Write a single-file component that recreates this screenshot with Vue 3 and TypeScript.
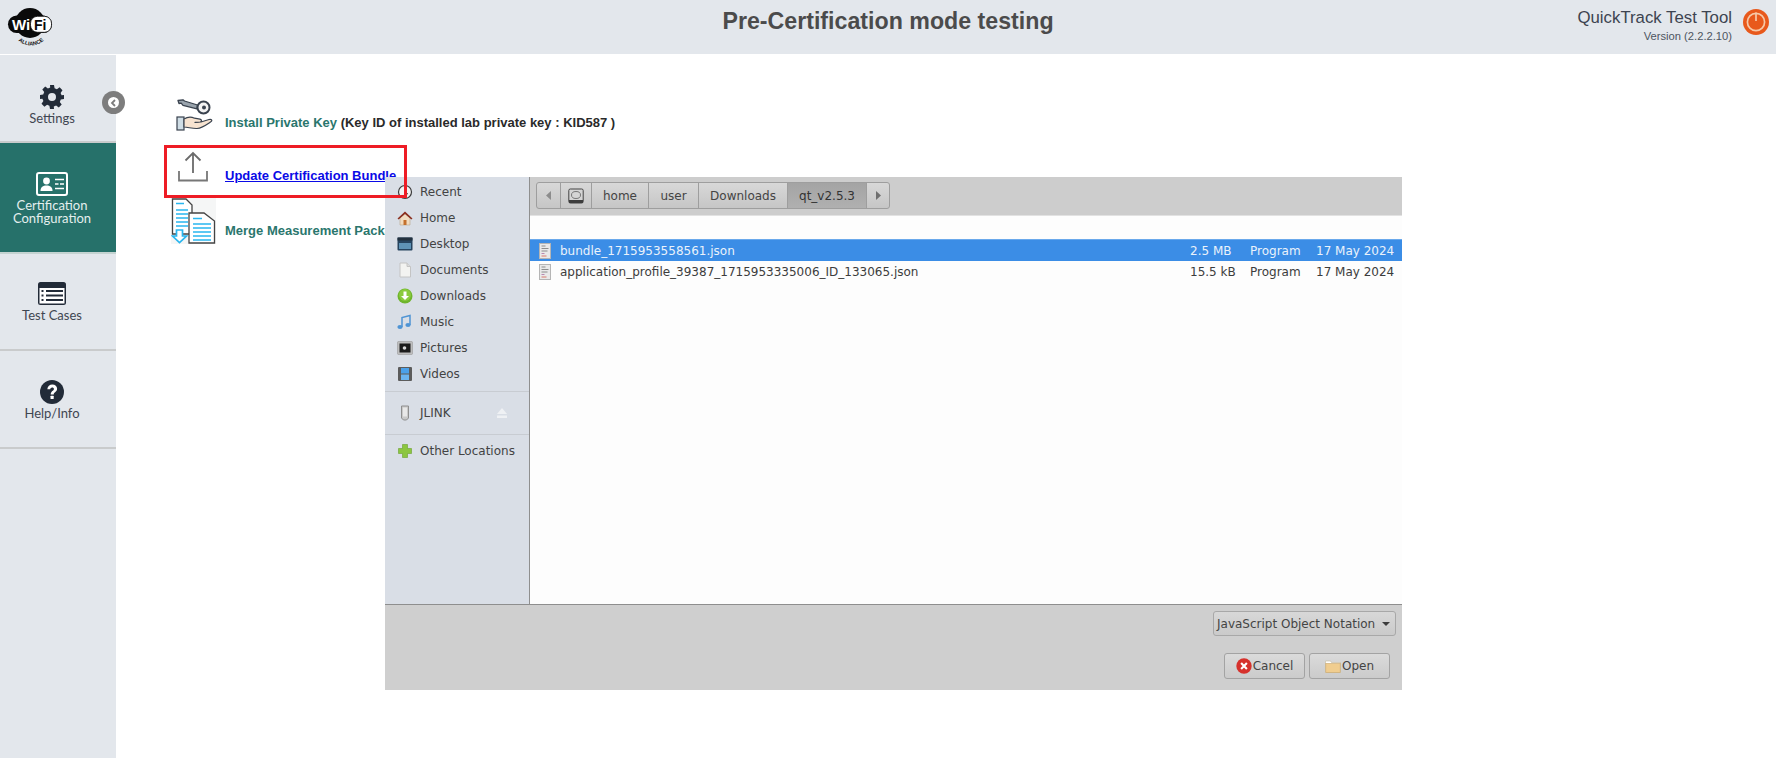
<script setup lang="ts">
interface Place { name: string; icon: string }
interface FileRow { name: string; size: string; kind: string; date: string; selected: boolean }

const places: Place[] = [
  { name: 'Recent', icon: 'recent' },
  { name: 'Home', icon: 'home' },
  { name: 'Desktop', icon: 'desktop' },
  { name: 'Documents', icon: 'documents' },
  { name: 'Downloads', icon: 'downloads' },
  { name: 'Music', icon: 'music' },
  { name: 'Pictures', icon: 'pictures' },
  { name: 'Videos', icon: 'videos' },
]
const crumbs = [
  { label: 'home', w: 57 },
  { label: 'user', w: 50 },
  { label: 'Downloads', w: 89 },
]
const files: FileRow[] = [
  { name: 'bundle_1715953558561.json', size: '2.5 MB', kind: 'Program', date: '17 May 2024', selected: true },
  { name: 'application_profile_39387_1715953335006_ID_133065.json', size: '15.5 kB', kind: 'Program', date: '17 May 2024', selected: false },
]
</script>

<template>
  <div class="page">
    <header class="top">
      <div class="logo">
        <svg width="48" height="40" viewBox="0 0 48 40">
          <circle cx="23" cy="16" r="15" fill="#0a0a0a" />
          <rect x="1" y="8.500" width="44" height="17.500" rx="8.700" fill="#0a0a0a" />
          <rect x="23.500" y="9.300" width="21" height="16" rx="7" fill="#fff" stroke="#0a0a0a" stroke-width=".8" />
          <text x="5" y="23" class="wi">Wi</text>
          <text x="27" y="23" class="fi">Fi</text>
          <path id="arc" d="M5 28 Q24 49 43 28" fill="none" />
          <text class="alliance" text-anchor="middle"><textPath href="#arc" startOffset="50%">ALLIANCE</textPath></text>
        </svg>
      </div>
      <h1 class="title">Pre-Certification mode testing</h1>
      <div class="brand">
        <div class="brand-text">
          <div class="brand-name">QuickTrack Test Tool</div>
          <div class="brand-ver">Version (2.2.2.10)</div>
        </div>
        <svg class="power" width="26" height="26" viewBox="0 0 26 26">
          <circle cx="13" cy="13" r="13" fill="#e8591c" />
          <circle cx="13" cy="13" r="8.600" fill="none" stroke="#f6c9a8" stroke-width="1.700" />
          <path d="M13 3.500V12" stroke="#f6c9a8" stroke-width="1.700" />
        </svg>
      </div>
    </header>

    <div class="body">
      <nav class="side">
        <div class="tile tile-settings">
          <svg width="24" height="24" viewBox="0 0 24 24" fill="#222b38">
            <path fill-rule="evenodd" d="M10 0h4l.6 3.200 2.300 1 2.700-1.900 2.900 2.900-1.900 2.700 1 2.300L24 10v4l-3.200.6-1 2.300 1.900 2.700-2.900 2.900-2.700-1.900-2.300 1L14 24h-4l-.6-3.200-2.300-1-2.700 1.900-2.900-2.900 1.900-2.700-1-2.300L0 14v-4l3.200-.6 1-2.300-1.900-2.700 2.900-2.900 2.700 1.900 2.300-1zM12 8a4 4 0 1 0 0 8 4 4 0 0 0 0-8z" />
          </svg>
          <span>Settings</span>
        </div>
        <div class="tile tile-cert">
          <svg width="32" height="24" viewBox="0 0 32 24">
            <rect x="1" y="1" width="30" height="22" rx="2" fill="#26716a" stroke="#fff" stroke-width="2" />
            <circle cx="10.500" cy="9" r="3.400" fill="#fff" />
            <path d="M4.500 19c0-4 2.500-5.500 6-5.500s6 1.500 6 5.500z" fill="#fff" />
            <path d="M19 7.500h9M19 12h3.500M24 12h4M19 16.500h9" stroke="#fff" stroke-width="1.500" />
          </svg>
          <span>Certification<br />Configuration</span>
        </div>
        <div class="tile tile-test">
          <svg width="28" height="23" viewBox="0 0 28 23">
            <rect width="28" height="23" rx="2.500" fill="#222b38" />
            <rect x="1.500" y="6" width="25" height="15.500" fill="#fff" />
            <path d="M8 9h17M8 13.500h17M8 18h17" stroke="#222b38" stroke-width="2" />
            <path d="M3.500 9h2M3.500 13.500h2M3.500 18h2" stroke="#222b38" stroke-width="2" />
          </svg>
          <span>Test Cases</span>
        </div>
        <div class="tile tile-help">
          <svg width="24" height="24" viewBox="0 0 24 24">
            <circle cx="12" cy="12" r="12" fill="#222b38" />
            <path d="M7.300 9.300C7.600 6.500 9.700 4.600 12.300 4.600c2.900 0 4.800 1.800 4.800 4.100 0 3.300-3.400 3.200-3.400 5.800h-3c0-3.700 3.200-3.700 3.200-5.600 0-1-.7-1.500-1.700-1.500-1.100 0-1.800.7-2 1.900z" fill="#fff" />
            <rect x="10.500" y="15.700" width="3.200" height="3.200" rx=".5" fill="#fff" />
          </svg>
          <span>Help/Info</span>
        </div>
      </nav>

      <main class="main">
        <div class="action action-key">
          <span class="action-icon">
            <svg width="37" height="33" viewBox="0 0 37 33">
              <path d="M21.500 6 8.500 2 7 .8 2 1.500l1 3 2.200-.4L7 6.300l14 3.500z" fill="#9aa4ad" stroke="#39424e" stroke-width="1.300" stroke-linejoin="round" />
              <circle cx="27.500" cy="8.500" r="6" fill="#f3f3f3" stroke="#39424e" stroke-width="2" />
              <circle cx="28" cy="8.500" r="2" fill="#39424e" />
              <rect x="1" y="18" width="7" height="13" fill="#cfdde5" stroke="#39424e" stroke-width="1.200" />
              <path d="M8 20c4-2.500 7-2.500 10.500-.8l5.500 1c2 .5 2 2.800 0 3l-5 .2 6-.4 8-2.500c2.800-.6 3.800 1 1.500 2.500-5 3.400-8.500 6-13.500 6.500-4 .2-8-1-13-1.500z" fill="#f7e3d0" stroke="#39424e" stroke-width="1.200" stroke-linejoin="round" />
            </svg>
          </span>
          <span class="action-text"><a class="link">Install Private Key</a> <b class="plain">(Key ID of installed lab private key : KID587 )</b></span>
        </div>
        <div class="action action-update">
          <span class="action-icon">
            <svg width="32" height="32" viewBox="0 0 32 32" fill="none" stroke="#6b6b6b" stroke-width="1.800">
              <path d="M16 22V2M8.500 9.500 16 2l7.500 7.500" />
              <path d="M2 20V29.500H30V20" stroke="#777" />
            </svg>
          </span>
          <span class="action-text"><a class="hot">Update Certification Bundle</a></span>
        </div>
        <div class="action action-merge">
          <span class="action-icon">
            <svg width="45" height="46" viewBox="0 0 45 46">
              <rect width="45" height="46" fill="#f5f6f6" />
              <path d="M1.500 1H15l6 6v29H1.500z" fill="#fff" stroke="#444" stroke-width="1.300" />
              <path d="M18 15h15l10.500 8v22H18z" fill="#fff" stroke="#444" stroke-width="1.300" />
              <path d="M5 5.500h8M5 12h12M5 16h12M5 20h12M5 24h12M5 28h12" stroke="#29b6ef" stroke-width="1.600" />
              <path d="M22 20.500h9M22 26h18M22 30h18M22 34h18M22 38h18M22 42h18" stroke="#29b6ef" stroke-width="1.600" />
              <path d="M5.500 32h6v6h4l-7 6.500-7-6.500h4z" fill="#fff" stroke="#29b6ef" stroke-width="1.700" />
            </svg>
          </span>
          <span class="action-text"><a class="link">Merge Measurement Package</a></span>
        </div>
      </main>
    </div>

    <button class="collapse" aria-label="Collapse">
      <span class="collapse-dot">
        <svg width="7" height="8" viewBox="0 0 7 8" fill="none" stroke="#7d7d7d" stroke-width="1.800"><path d="M5 1 2 4l3 3" /></svg>
      </span>
    </button>

    <section class="dialog">
      <aside class="places">
        <div v-for="p in places" :key="p.name" class="place">
          <span class="place-icon">
            <svg width="16" height="16" viewBox="0 0 16 16">
              <template v-if="p.icon === 'recent'">
                <circle cx="8" cy="8" r="6.500" fill="#f2f2f2" stroke="#3a3a3a" stroke-width="1.200" />
                <path d="M8 4v4.500l3 1.500" stroke="#3a3a3a" fill="none" />
              </template>
              <template v-else-if="p.icon === 'home'">
                <path d="M3 8v7h10V8L8 3.500z" fill="#f1dcc0" stroke="#b9a48c" stroke-width=".6" />
                <rect x="6.500" y="10" width="3" height="5" fill="#c4702c" />
                <path d="M.5 8.500 8 1.500l7.500 7-1.200 1L8 4 1.700 9.500z" fill="#8b2f1f" />
              </template>
              <template v-else-if="p.icon === 'desktop'">
                <rect x=".5" y="1.500" width="15" height="13" rx="1" fill="#27445f" />
                <rect x=".5" y="1.500" width="15" height="3" fill="#22303e" />
                <rect x="2" y="7" width="12" height="6" fill="#5f93b6" />
              </template>
              <template v-else-if="p.icon === 'documents'">
                <path d="M3 1h7l3.500 3.500V15H3z" fill="#f3f3f1" stroke="#c4c4c4" />
                <path d="M10 1v3.500h3.500" fill="#dcdcdc" stroke="#c4c4c4" />
              </template>
              <template v-else-if="p.icon === 'downloads'">
                <circle cx="8" cy="8" r="7.500" fill="#6fb52c" />
                <circle cx="8" cy="7" r="6" fill="#8bcb3d" />
                <path d="M6.500 3.500h3V8H12l-4 4-4-4h2.500z" fill="#fff" />
              </template>
              <template v-else-if="p.icon === 'music'">
                <path d="M5 13V3.500L13 1.500v9.500" fill="none" stroke="#4f94d4" stroke-width="1.500" />
                <ellipse cx="3" cy="13" rx="2.600" ry="2" fill="#4f94d4" />
                <ellipse cx="11" cy="11" rx="2.600" ry="2" fill="#4f94d4" />
              </template>
              <template v-else-if="p.icon === 'pictures'">
                <rect x=".5" y="1.500" width="15" height="13" rx="1" fill="#bdbdbd" stroke="#999" stroke-width=".6" />
                <rect x="2.500" y="3.500" width="11" height="9" fill="#1b1b1b" />
                <circle cx="7.500" cy="8" r="1.800" fill="#d8d8d8" />
              </template>
              <template v-else>
                <rect x="1" y="1" width="14" height="14" rx="1" fill="#5c5c5c" />
                <rect x="4" y="2" width="8" height="5.500" fill="#4ba1ea" />
                <rect x="4" y="8.500" width="8" height="5.500" fill="#6ab4f0" />
              </template>
            </svg>
          </span>
          <span>{{ p.name }}</span>
        </div>
        <div class="sep"></div>
        <div class="place place-drive">
          <span class="place-icon">
            <svg width="16" height="16" viewBox="0 0 16 16"><path d="M4.500 1h7v12L9.500 15h-3l-2-2z" fill="#c9c9c9" stroke="#8f8f8f" /><rect x="6" y="2.500" width="4" height="9" fill="#e8e8e8" /></svg>
          </span>
          <span class="drive-name">JLINK</span>
          <svg class="eject" width="12" height="12" viewBox="0 0 12 12" fill="#eff1f4"><path d="M6 1l5 6H1z" /><rect x="1" y="8.500" width="10" height="2.500" /></svg>
        </div>
        <div class="sep"></div>
        <div class="place place-other">
          <span class="place-icon">
            <svg width="16" height="16" viewBox="0 0 16 16"><path d="M5.500 1.500h5v4h4v5h-4v4h-5v-4h-4v-5h4z" fill="#8cc63f" stroke="#6aa02c" stroke-width=".6" /></svg>
          </span>
          <span>Other Locations</span>
        </div>
      </aside>

      <div class="pane">
        <div class="toolbar">
          <div class="crumbs">
            <span class="crumb crumb-arrow"><svg width="7" height="9" viewBox="0 0 7 9" fill="#8c8c8c"><path d="M6 0v9L1 4.500z" /></svg></span>
            <span class="crumb crumb-disk">
              <svg width="16" height="16" viewBox="0 0 16 16">
                <rect x=".8" y="1" width="14.400" height="14" rx="1.500" fill="#d5d5d5" stroke="#444" />
                <ellipse cx="8" cy="7" rx="4.500" ry="3.500" fill="none" stroke="#777" />
                <rect x="1" y="12" width="14" height="3" fill="#3d3d3d" />
              </svg>
            </span>
            <span v-for="c in crumbs" :key="c.label" class="crumb" :style="{ width: c.w + 'px' }">{{ c.label }}</span>
            <span class="crumb crumb-active">qt_v2.5.3</span>
            <span class="crumb crumb-arrow crumb-last"><svg width="7" height="9" viewBox="0 0 7 9" fill="#6f6f6f"><path d="M1 0v9l5-4.500z" /></svg></span>
          </div>
        </div>
        <div class="list">
          <div v-for="f in files" :key="f.name" class="file" :class="{ on: f.selected }">
            <span class="file-icon">
              <svg width="12" height="16" viewBox="0 0 12 16">
                <rect x=".5" y=".5" width="11" height="15" fill="#e9e9e9" stroke="#b5b5b5" />
                <path d="M2.500 3h4M2.500 5.500h7M2.500 8h6" stroke="#8d8d8d" />
                <path d="M2.500 10.500h3" stroke="#b988b0" />
                <path d="M2.500 13h5" stroke="#d97a6d" />
              </svg>
            </span>
            <span class="file-name">{{ f.name }}</span>
            <span class="file-size">{{ f.size }}</span>
            <span class="file-kind">{{ f.kind }}</span>
            <span class="file-date">{{ f.date }}</span>
          </div>
        </div>
      </div>

      <div class="actions">
        <div class="combo">JavaScript Object Notation <i class="caret"></i></div>
        <div class="btns">
          <div class="btn">
            <svg width="16" height="16" viewBox="0 0 15 15">
              <circle cx="7.500" cy="7.500" r="7.200" fill="#d6312c" />
              <path d="M4.800 4.800l5.400 5.400M10.200 4.800l-5.400 5.400" stroke="#fff" stroke-width="2" />
            </svg>
            <span>Cancel</span>
          </div>
          <div class="btn">
            <svg width="16" height="14" viewBox="0 0 16 14">
              <path d="M.5 2h5l1 1.500h9V13.500H.5z" fill="#fff" stroke="#c4b89c" stroke-width=".6" />
              <rect x=".8" y="4.500" width="14.400" height="9" fill="#f0cd8f" stroke="#c8a66a" stroke-width=".6" />
            </svg>
            <span>Open</span>
          </div>
        </div>
      </div>
    </section>

    <div class="highlight"></div>
  </div>
</template>

<style>
html, body { margin: 0; background: #fff; }
</style>

<style scoped>
.page { position: relative; width: 1776px; height: 758px; overflow: hidden; background: #fff; font-family: "Liberation Sans", Arial, sans-serif; }
.top { height: 54px; background: #e3e7ec; display: grid; grid-template-columns: 1fr auto 1fr; align-items: start; margin-bottom: 1px; }
.logo { padding: 7px 0 0 7px; height: 40px; }
.logo svg { display: block; }
.wi { font: bold 15px "Liberation Sans", sans-serif; fill: #fff; }
.fi { font: bold 14px "Liberation Sans", sans-serif; fill: #0a0a0a; }
.alliance { font: bold 5.500px "Liberation Sans", sans-serif; fill: #111; }
.title { margin: 6px 0 0; font-size: 23.200px; line-height: 30px; font-weight: bold; color: #4b4b4b; }
.brand { display: flex; justify-content: flex-end; padding: 9px 7px 0 0; gap: 11px; }
.brand-text { text-align: right; }
.brand-name { font-size: 16.800px; line-height: 18px; color: #3d4450; }
.brand-ver { font-size: 11.200px; line-height: 14px; margin-top: 2px; color: #4d5561; }
.body { display: flex; height: 703px; }
.side { width: 116px; background: #e3e7ec; flex: none; }
.tile { box-sizing: border-box; display: flex; flex-direction: column; align-items: center; padding-right: 12px; font-family: Lato, sans-serif; font-size: 13px; line-height: 13px; color: #3f4651; text-align: center; border-bottom: 2px solid #c9cbcc; }
.tile-settings { height: 88px; padding-top: 30px; gap: 3px; }
.tile-cert { height: 111px; padding-top: 29px; gap: 3px; background: #26716a; color: #e4efee; border-bottom-color: #c4d3d1; }
.tile-test { height: 97px; padding-top: 28px; gap: 4px; }
.tile-help { height: 98px; padding-top: 29px; gap: 3px; }
.main { flex: 1; padding: 42px 0 0 48px; }
.action { display: flex; align-items: flex-end; }
.action-icon { width: 61px; flex: none; display: flex; justify-content: center; align-self: flex-end; box-sizing: border-box; }
.action-icon svg { display: block; }
.action-key { height: 48px; }
.action-key .action-icon { padding: 0 1px 13px 0; }
.action-key .action-text { padding-bottom: 14px; }
.action-update { height: 52px; }
.action-update .action-icon { padding: 0 3px 14px 0; }
.action-update .action-text { padding-bottom: 13px; }
.action-merge { height: 52px; }
.action-merge .action-icon { padding: 0 2px 5px 0; }
.action-merge .action-text { padding-bottom: 10px; }
.action-text { font-size: 13px; line-height: 16px; font-weight: bold; white-space: nowrap; }
.link { color: #2a766d; }
.plain { color: #2a2a2a; }
.hot { color: #0a0ae6; text-decoration: underline; }
.collapse { position: absolute; left: 102px; top: 91px; width: 23px; height: 23px; border: 0; padding: 0; border-radius: 50%; background: #7d7d7d; display: flex; align-items: center; justify-content: center; }
.collapse-dot { width: 11px; height: 11px; border-radius: 50%; background: #fff; display: flex; align-items: center; justify-content: center; }
.dialog { position: absolute; left: 385px; top: 177px; width: 1017px; height: 513px; display: grid; grid-template-columns: 145px 1fr; grid-template-rows: 427px 86px; font-family: "DejaVu Sans", sans-serif; font-size: 12px; color: #3c3c3c; }
.places { background: #d9dee6; border-right: 1px solid #8f8f8f; padding-top: 2px; box-sizing: border-box; }
.place { height: 26px; display: flex; align-items: center; color: #434343; }
.place-icon { width: 35px; padding-left: 12px; box-sizing: border-box; flex: none; display: flex; }
.sep { height: 1px; background: #c8ccd2; margin-top: 4px; }
.place-drive { margin: 8px 0; }
.drive-name { flex: 1; }
.eject { margin-right: 21px; }
.place-other { margin-top: 3px; }
.pane { display: flex; flex-direction: column; background: #fdfdfd; }
.toolbar { height: 39px; box-sizing: border-box; background: #cdcdcd; border-bottom: 1px solid #e2e2e2; padding: 5px 0 0 6px; }
.crumbs { display: inline-flex; height: 27px; box-sizing: border-box; border: 1px solid #9e9e9e; border-radius: 3px; overflow: hidden; background: linear-gradient(#d8d8d8, #c6c6c6); }
.crumb { display: flex; align-items: center; justify-content: center; box-sizing: border-box; border-right: 1px solid #9e9e9e; color: #444; }
.crumb-arrow { width: 24px; }
.crumb-disk { width: 31px; }
.crumb-active { width: 79px; background: linear-gradient(#a4a4a4, #b0b0b0); color: #333; }
.crumb-last { width: 22px; border-right: 0; }
.list { padding-top: 23px; flex: 1; }
.file { display: grid; grid-template-columns: 30px 630px 60px 66px auto; height: 21px; align-items: center; color: #3c3c3c; }
.file.on { height: 22px; background: #3b8de6; color: #eaf2fb; border-top: 1px solid #6aa9ec; box-sizing: border-box; }
.file-icon { display: flex; padding-left: 9px; }
.actions { grid-column: 1 / 3; background: #cfcfcf; border-top: 1px solid #8e8e8e; box-sizing: border-box; display: flex; flex-direction: column; align-items: flex-end; padding: 6px 6px 0 0; }
.combo { height: 25px; width: 183px; box-sizing: border-box; display: flex; align-items: center; justify-content: space-between; padding: 0 5px 0 3px; border: 1px solid #a8a8a8; border-radius: 3px; background: linear-gradient(#d8d8d8, #cacaca); white-space: nowrap; color: #444; }
.caret { width: 0; height: 0; border: 4px solid transparent; border-top: 4px solid #3c3c3c; border-bottom: 0; }
.btns { display: flex; gap: 4px; margin: 17px 6px 0 0; }
.btn { width: 81px; height: 26px; box-sizing: border-box; display: flex; align-items: center; justify-content: center; gap: 1px; border: 1px solid #a3a3a3; border-radius: 3px; background: linear-gradient(#dbdbdb, #cbcbcb); color: #444; }
.highlight { position: absolute; left: 164px; top: 145px; width: 243px; height: 53px; box-sizing: border-box; border: 3px solid #ee1c25; }
</style>
